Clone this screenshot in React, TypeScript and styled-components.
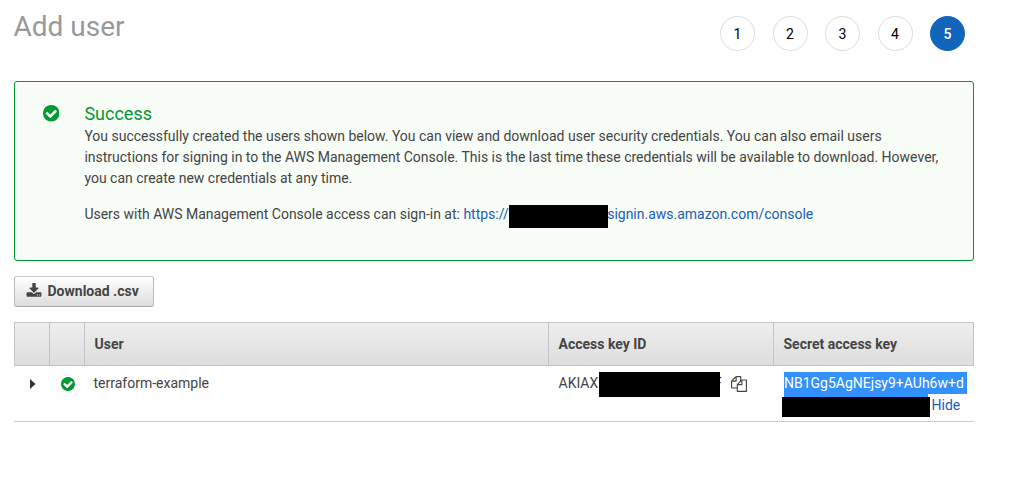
import React from "react";
import styled, { createGlobalStyle } from "styled-components";

const GlobalStyle = createGlobalStyle`
  * { box-sizing: border-box; }
  body {
    margin: 0;
    background: #fff;
    color: #444;
    font: 14px/21px Roboto, "Liberation Sans", sans-serif;
  }
`;

const Page = styled.main`
  width: 974px;
  padding-left: 14px;
`;

const Header = styled.header`
  display: flex;
  justify-content: space-between;
  height: 81px;
  padding: 10px 9px 0 0;
`;

const Title = styled.h1`
  margin: 0 0 0 -0.5px;
  color: #999;
  font-size: 28px;
  line-height: 33px;
  font-weight: 400;
`;

const Steps = styled.ol`
  display: flex;
  gap: 17.5px;
  margin: 6px 0 0;
  padding: 0;
  list-style: none;
`;

const Step = styled.li<{ $active?: boolean }>`
  display: flex;
  align-items: center;
  justify-content: center;
  width: 35px;
  height: 35px;
  border: 1px solid ${(p) => (p.$active ? "#1166bb" : "#ddd")};
  border-radius: 50%;
  background: ${(p) => (p.$active ? "#1166bb" : "#fff")};
  color: ${(p) => (p.$active ? "#fff" : "#000")};
  font-weight: ${(p) => (p.$active ? 500 : 400)};
  padding-top: 1px;
`;

const Alert = styled.section`
  display: flex;
  height: 180px;
  padding: 20px 27px 0;
  border: 1px solid #093;
  border-radius: 3px;
  background: #f8fdf8;
`;

const AlertIcon = styled.div`
  width: 42.4px;
  padding: 3px 0 0 0.5px;
  flex: none;
`;

const AlertTitle = styled.h2`
  margin: 0 0 1px;
  color: #093;
  font-size: 18px;
  line-height: 23px;
  font-weight: 400;
`;

const Paragraph = styled.p`
  margin: 0 0 15px;
  letter-spacing: -0.002px;
`;

const Link = styled.a`
  color: #1a5cb8;
  text-decoration: none;
`;

const Redaction = styled.span<{ $w: number; $h: number }>`
  display: inline-block;
  flex: none;
  width: ${(p) => p.$w}px;
  height: ${(p) => p.$h}px;
  background: #000;
`;

const SignIn = styled.p`
  display: flex;
  margin: 0;
  height: 23px;
  letter-spacing: -0.01px;

  ${Redaction} { margin: 1px -0.5px 0 0; }
`;

const DownloadButton = styled.button`
  display: flex;
  align-items: center;
  gap: 5.5px;
  width: 140px;
  height: 31px;
  margin: 15px 0;
  padding: 0 0 1px 11px;
  border: 1px solid #bbb;
  border-top-color: #ccc;
  border-bottom-color: #aaa;
  border-radius: 3px;
  background: linear-gradient(#fff, #ddd);
  color: #444;
  font: 700 14px/21px Roboto, "Liberation Sans", sans-serif;
  white-space: nowrap;
`;

const columns = "35px 35px 464px 225px 1fr";

const HeadRow = styled.div`
  display: grid;
  grid-template-columns: ${columns};
  height: 44px;
  border: 1px solid #c4c4c4;
  border-left: 0;
  background: linear-gradient(#eee, #ddd);
`;

const HeadCell = styled.div`
  padding: 11px 0 0 9.5px;
  border-left: 1px solid #c4c4c4;
  font-weight: 700;
`;

const Row = styled.div`
  display: grid;
  grid-template-columns: ${columns};
  height: 56px;
  border-bottom: 1px solid #ccc;
`;

const Cell = styled.div<{ $top?: number; $left?: number }>`
  display: flex;
  align-items: flex-start;
  padding: ${(p) => p.$top ?? 7}px 0 0 ${(p) => p.$left ?? 10.5}px;
`;

const KeyText = styled.span`
  width: 40.5px;
  flex: none;
`;

const KeyRedaction = styled(Redaction)`
  position: relative;
  z-index: 1;
  margin-top: -1px;
`;

const LastLetter = styled.span`
  width: 8px;
  margin-left: -6px;
`;

const CopySlot = styled.span`
  display: flex;
  margin: 3px 0 0 9px;
`;

const Secret = styled.div`
  padding: 6px 0 0 9px;
`;

const SelectedText = styled.div`
  width: 183px;
  height: 22px;
  margin-left: 2px;
  background: #3390ff;
  color: #fff;
  line-height: 23px;
  white-space: nowrap;
`;

const SelectedTail = styled.div`
  width: 144px;
  height: 3px;
  margin-left: 2px;
  background: #3390ff;
`;

const SecretLine = styled.div`
  display: flex;
  gap: 1.5px;
  height: 20px;
  line-height: 17px;
`;

interface IconProps {
  d: string;
  size: number;
  box: number;
  color?: string;
}

const Icon = ({ d, size, box, color = "#444" }: IconProps) => (
  <svg width={size} height={size} viewBox={`0 0 ${box} ${box}`} fill={color} display="block">
    <path d={d} />
  </svg>
);

const check =
  "M1284 606q0-28-18-46l-91-90q-19-19-45-19t-45 19l-408 407-226-226q-19-19-45-19t-45 19l-91 90q-18 18-18 46 0 27 18 45l362 362q19 19 45 19 27 0 46-19l543-543q18-18 18-45zm252 162q0 209-103 385.5t-279.5 279.5-385.5 103-385.5-103-279.5-279.5-103-385.5 103-385.5 279.5-279.5 385.5-103 385.5 103 279.5 279.5 103 385.5z";
const download =
  "M1344 1344q0-26-19-45t-45-19-45 19-19 45 19 45 45 19 45-19 19-45zm256 0q0-26-19-45t-45-19-45 19-19 45 19 45 45 19 45-19 19-45zm128-224v320q0 40-28 68t-68 28h-1472q-40 0-68-28t-28-68v-320q0-40 28-68t68-28h465l135 136q58 56 136 56t136-56l136-136h464q40 0 68 28t28 68zm-325-569q17 41-14 70l-448 448q-18 19-45 19t-45-19l-448-448q-31-29-14-70 17-39 59-39h256v-448q0-26 19-45t45-19h256q26 0 45 19t19 45v448h256q42 0 59 39z";
const copy =
  "M1696 384q40 0 68 28t28 68v1216q0 40-28 68t-68 28h-960q-40 0-68-28t-28-68v-288h-544q-40 0-68-28t-28-68v-672q0-40 20-88t48-76l408-408q28-28 76-48t88-20h416q40 0 68 28t28 68v328q68-40 128-40h416zm-544 213l-299 299h299v-299zm-640-384l-299 299h299v-299zm196 647l316-316v-416h-384v416q0 40-28 68t-68 28h-416v640h512v-256q0-40 20-88t48-76zm956 804v-1152h-384v416q0 40-28 68t-68 28h-416v640h896z";

export default function App() {
  return (
    <>
      <GlobalStyle />
      <Page>
        <Header>
          <Title>Add user</Title>
          <Steps>
            {[1, 2, 3, 4, 5].map((n) => (
              <Step key={n} $active={n === 5}>{n}</Step>
            ))}
          </Steps>
        </Header>

        <Alert>
          <AlertIcon>
            <Icon d={check} size={16.5} box={1536} color="#093" />
          </AlertIcon>
          <div>
            <AlertTitle>Success</AlertTitle>
            <Paragraph>
              You successfully created the users shown below. You can view and download user security credentials. You can also email users
              <br />
              instructions for signing in to the AWS Management Console. This is the last time these credentials will be available to download. However,
              <br />
              you can create new credentials at any time.
            </Paragraph>
            <SignIn>
              <span>Users with AWS Management Console access can sign-in at:&nbsp;</span>
              <Link>https://</Link>
              <Redaction $w={99} $h={23} />
              <Link>signin.aws.amazon.com/console</Link>
            </SignIn>
          </div>
        </Alert>

        <DownloadButton>
          <Icon d={download} size={16} box={1792} />
          Download .csv
        </DownloadButton>

        <HeadRow>
          <HeadCell />
          <HeadCell />
          <HeadCell>User</HeadCell>
          <HeadCell>Access key ID</HeadCell>
          <HeadCell>Secret access key</HeadCell>
        </HeadRow>
        <Row>
          <Cell $top={13} $left={16}>
            <svg width="6" height="10" viewBox="0 0 6 10" fill="#333">
              <path d="M0 0L5.5 5L0 10Z" />
            </svg>
          </Cell>
          <Cell $top={11} $left={12}>
            <Icon d={check} size={14} box={1536} color="#093" />
          </Cell>
          <Cell $left={9.5}>
            <span>terraform-example</span>
          </Cell>
          <Cell>
            <KeyText>AKIAX</KeyText>
            <KeyRedaction $w={121} $h={25} />
            <LastLetter>F</LastLetter>
            <CopySlot>
              <Icon d={copy} size={16} box={1792} />
            </CopySlot>
          </Cell>
          <Secret>
            <SelectedText>NB1Gg5AgNEjsy9+AUh6w+d</SelectedText>
            <SelectedTail />
            <SecretLine>
              <Redaction $w={148} $h={20} />
              <Link>Hide</Link>
            </SecretLine>
          </Secret>
        </Row>
      </Page>
    </>
  );
}
